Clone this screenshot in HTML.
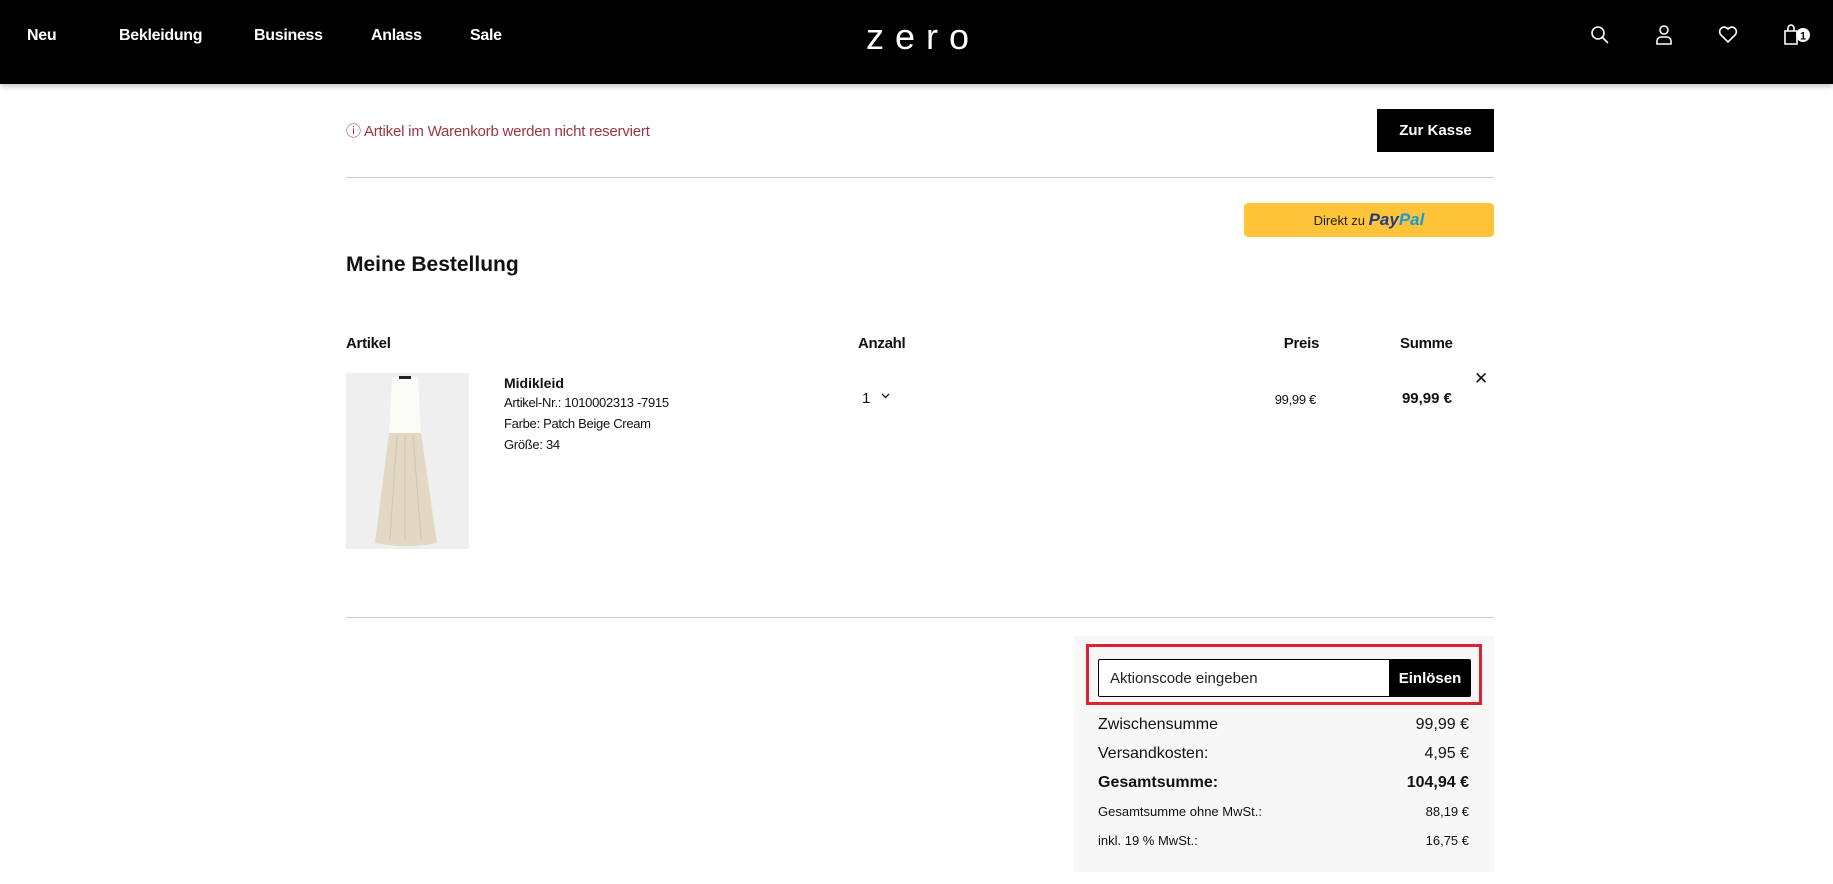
<!DOCTYPE html>
<html><head><meta charset="utf-8"><style>
*{margin:0;padding:0;box-sizing:border-box}
body{width:1833px;height:884px;overflow:hidden;background:#fff;font-family:"Liberation Sans",sans-serif;color:#111;position:relative}
.a{position:absolute;white-space:nowrap}
header{position:absolute;left:0;top:0;width:1833px;height:84px;background:#000;box-shadow:0 2px 6px rgba(0,0,0,.25)}
.nav{color:#fff;font-weight:bold;font-size:16px;top:27px;letter-spacing:-0.3px}
.hr{position:absolute;left:346px;width:1148px;height:1px;background:#ccc}
.th{font-weight:bold;font-size:15px;top:335px;letter-spacing:-0.3px}
.sm{font-size:13px;letter-spacing:-0.3px}
.row{position:absolute;left:1098px;width:371px;display:flex;justify-content:space-between;font-size:16px}
</style></head><body>
<header>
<div class="a nav" style="left:27px">Neu</div>
<div class="a nav" style="left:119px">Bekleidung</div>
<div class="a nav" style="left:254px">Business</div>
<div class="a nav" style="left:371px">Anlass</div>
<div class="a nav" style="left:470px">Sale</div>
<div class="a" style="left:866px;top:16px;color:#fff;font-size:36px;letter-spacing:11px;font-weight:300;line-height:42px">zero</div>
<svg class="a" style="left:1590px;top:25px" width="20" height="20" viewBox="0 0 20 20" fill="none" stroke="#fff" stroke-width="1.6"><circle cx="8" cy="8" r="6"/><path d="M12.5 12.5 18 18"/></svg>
<svg class="a" style="left:1655px;top:24px" width="18" height="22" viewBox="0 0 18 22" fill="none" stroke="#fff" stroke-width="1.6"><circle cx="9" cy="6" r="4"/><path d="M2 20v-3a4 4 0 0 1 4-4h6a4 4 0 0 1 4 4v3z"/></svg>
<svg class="a" style="left:1718px;top:26px" width="20" height="18" viewBox="0 0 20 18" fill="none" stroke="#fff" stroke-width="1.6"><path d="M10 16 2.5 8.5A4.5 4.5 0 0 1 10 3a4.5 4.5 0 0 1 7.5 5.5z"/></svg>
<svg class="a" style="left:1783px;top:24px" width="30" height="22" viewBox="0 0 30 22" fill="none" stroke="#fff" stroke-width="1.6"><path d="M2 7h12v13H2z M5 7V4a3 3 0 0 1 6 0v3"/><circle cx="20" cy="11" r="7" fill="#fff" stroke="none"/><text x="20" y="15.5" font-size="11" font-weight="bold" fill="#000" stroke="none" text-anchor="middle" font-family="Liberation Sans">1</text></svg>
</header>

<div class="a" style="left:346px;top:120px;color:#9b3445;font-size:15px;letter-spacing:-0.2px">ⓘ Artikel im Warenkorb werden nicht reserviert</div>
<div class="a" style="left:1377px;top:109px;width:117px;height:43px;background:#000;color:#fff;font-weight:bold;font-size:15px;display:flex;align-items:center;justify-content:center">Zur Kasse</div>
<div class="hr" style="top:177px"></div>
<div class="a" style="left:1244px;top:203px;width:250px;height:34px;background:#ffc439;border-radius:4px;display:flex;align-items:center;justify-content:center;font-size:13px;color:#222">Direkt zu&nbsp;<b style="font-style:italic;font-size:17px;color:#253b80">Pay</b><b style="font-style:italic;font-size:17px;color:#179bd7">Pal</b></div>
<div class="a" style="left:346px;top:253px;font-size:21px;font-weight:bold">Meine Bestellung</div>

<div class="a th" style="left:346px">Artikel</div>
<div class="a th" style="left:858px">Anzahl</div>
<div class="a th" style="left:1283px;width:36px;text-align:right">Preis</div>
<div class="a th" style="left:1400px;width:52px;text-align:right">Summe</div>

<svg class="a" style="left:346px;top:373px" width="123" height="176" viewBox="0 0 123 176"><rect width="123" height="176" fill="#efefef"/><path d="M46 4h26l3 58H43z" fill="#fbfbf8"/><rect x="53" y="3" width="12" height="3" fill="#222"/><path d="M43 60h32l16 110q-30 6-62 0z" fill="#e2d8c3"/><path d="M59 62v105M51 62l-7 104M67 62l8 104" stroke="#d2c6ae" stroke-width="1"/></svg>
<div class="a" style="left:504px;top:375px;font-size:14px;font-weight:bold">Midikleid</div>
<div class="a sm" style="left:504px;top:395px">Artikel-Nr.: 1010002313 -7915</div>
<div class="a sm" style="left:504px;top:416px">Farbe: Patch Beige Cream</div>
<div class="a sm" style="left:504px;top:437px">Größe: 34</div>
<div class="a" style="left:862px;top:390px;font-size:15px">1</div>
<svg class="a" style="left:881px;top:393px" width="9" height="6" viewBox="0 0 9 6" fill="none" stroke="#111" stroke-width="1.3"><path d="M1 1l3.5 3.5L8 1"/></svg>
<div class="a sm" style="left:1250px;top:392px;width:66px;text-align:right">99,99 €</div>
<div class="a" style="left:1380px;top:390px;width:72px;text-align:right;font-weight:bold;font-size:15px">99,99 €</div>
<div class="a" style="left:1474px;top:369px;font-size:17px">✕</div>

<div class="hr" style="top:617px"></div>
<div class="a" style="left:1074px;top:636px;width:420px;height:236px;background:#f7f7f7"></div>
<div class="a" style="left:1086px;top:644px;width:396px;height:61px;border:3px solid #d9232e"></div>
<div class="a" style="left:1098px;top:659px;width:373px;height:38px;border:1px solid #000;border-radius:2px;background:#fff;overflow:hidden">
<div class="a" style="left:11px;top:10px;font-size:15px;color:#222">Aktionscode eingeben</div>
<div class="a" style="left:290px;top:0;width:82px;height:36px;background:#000;color:#fff;font-weight:bold;font-size:15px;display:flex;align-items:center;justify-content:center">Einlösen</div>
</div>
<div class="row" style="top:716px"><span>Zwischensumme</span><span>99,99 €</span></div>
<div class="row" style="top:745px"><span>Versandkosten:</span><span>4,95 €</span></div>
<div class="row" style="top:774px;font-weight:bold"><span>Gesamtsumme:</span><span>104,94 €</span></div>
<div class="row" style="top:804px;font-size:13px"><span>Gesamtsumme ohne MwSt.:</span><span>88,19 €</span></div>
<div class="row" style="top:833px;font-size:13px"><span>inkl. 19 % MwSt.:</span><span>16,75 €</span></div>
</body></html>
